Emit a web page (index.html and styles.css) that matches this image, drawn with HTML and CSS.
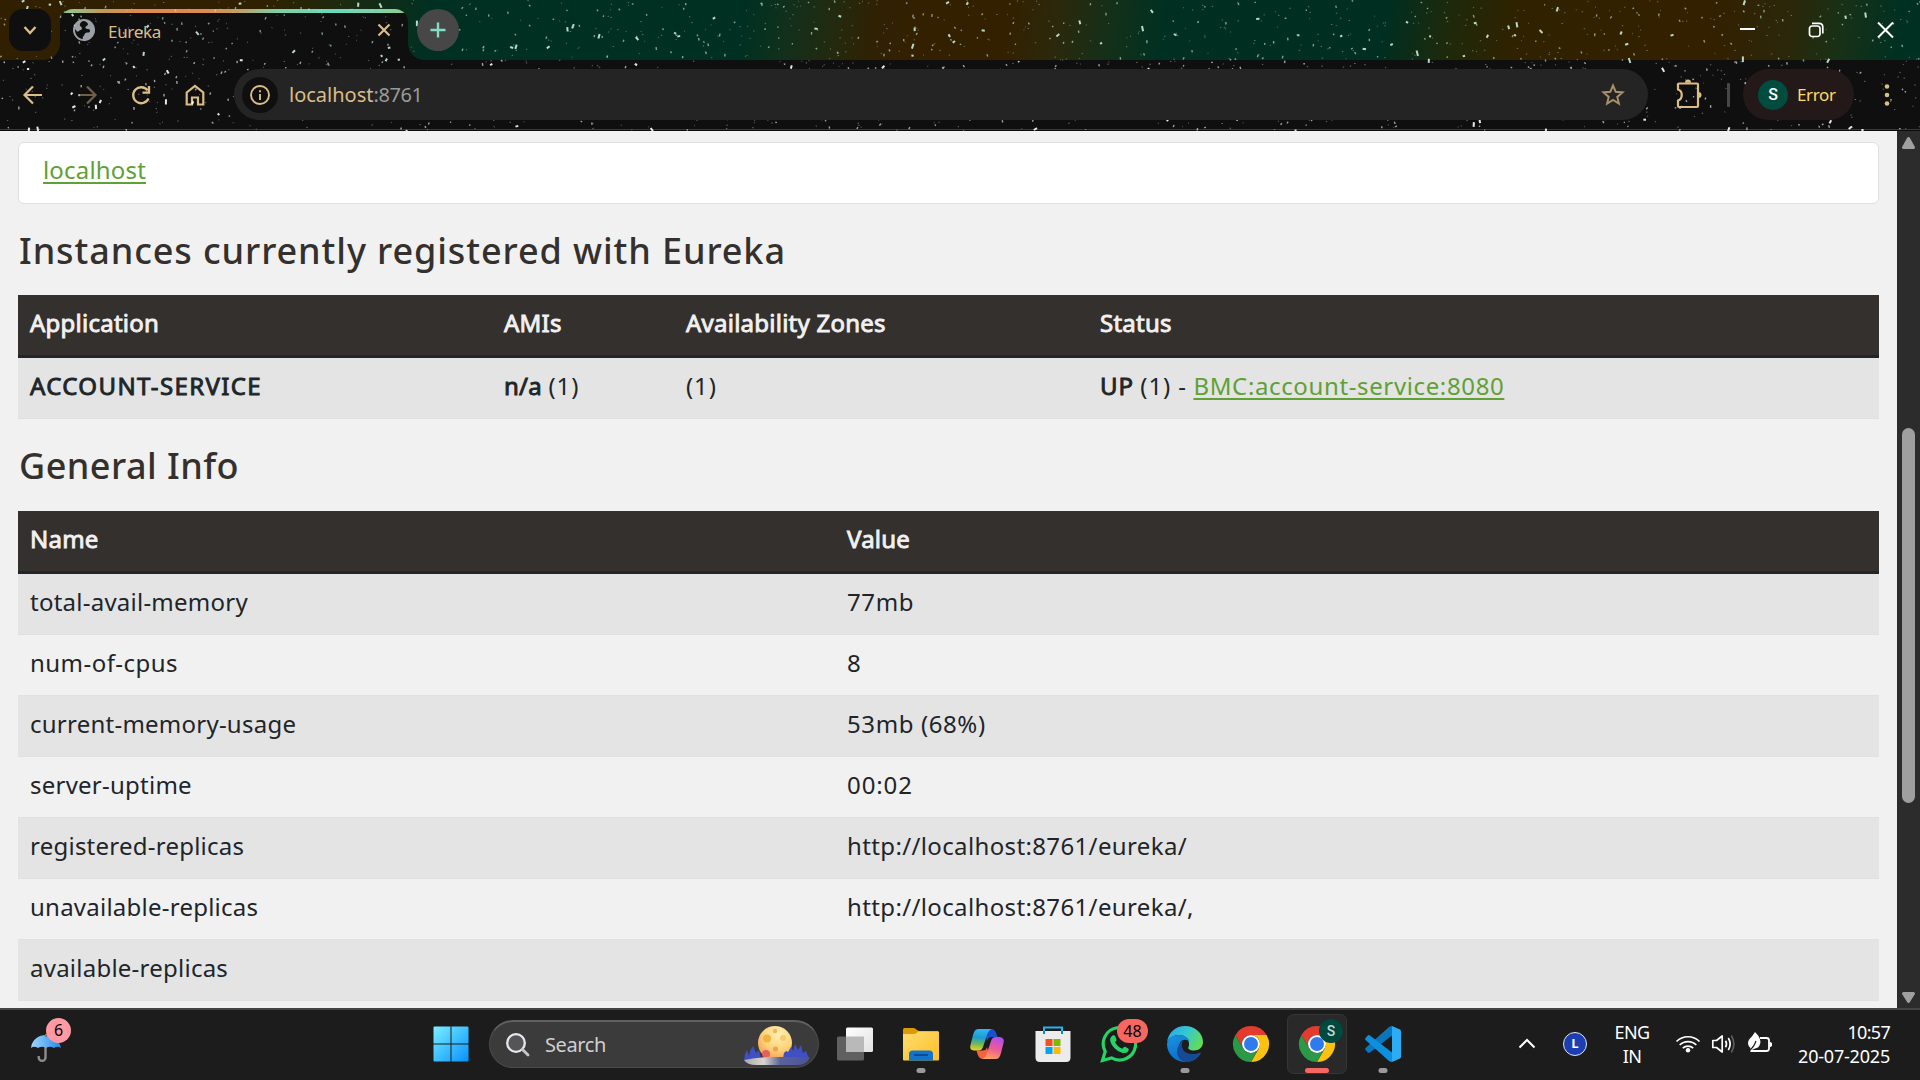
FILE: index.html
```html
<!DOCTYPE html>
<html lang="en">
<head>
<meta charset="utf-8">
<title>Eureka</title>
<link rel="stylesheet" href="styles.css">
</head>
<body>
<div class="screen">
  <header class="chrome">
    <svg class="stars" id="stars" width="1920" height="131" viewBox="0 0 1920 131"></svg>
    <div class="tabstrip">
      <button class="tab-search"><svg width="42" height="42" viewBox="-21 -21 42 42"><path d="M-5.500-3 0 3 5.500-3" fill="none" stroke="#dbbd87" stroke-width="2.400"/></svg></button>
      <div class="tab">
        <svg class="globe" width="24" height="24" viewBox="-12 -12 24 24"><circle r="11" fill="#9aa0a6"/><path d="M-1-9C-4-7.500-5-5-3.500-3.500-1.500-2.500-1.500-.5-3.500 0-5.500.5-5 2-7 1.500L-9-1C-9.500 4-6 8.500-1 9-2 7 0 6 .5 4.500 1 2.500 3 2.500 4.500 2.500 6 2.500 6.500 1 5.500-.5 4-1.500 2.500-.5 1.500-2 1-4 3.500-4 4-5.500 4-7 2-9-1-9Z" fill="#0f0f0f"/></svg>
        <span class="tab-title">Eureka</span>
        <svg class="tab-close" width="20" height="20" viewBox="-10 -10 20 20"><path d="M-5.500-5.500 5.500 5.500M5.500-5.500-5.500 5.500" stroke="#dbbd87" stroke-width="2.200"/></svg>
      </div>
      <button class="new-tab"><svg width="42" height="42" viewBox="-21 -21 42 42"><path d="M-7.500 0H7.500M0-7.500V7.500" stroke="#84dcc6" stroke-width="2.400"/></svg></button>
      <div class="window-controls">
        <svg width="69" height="60" viewBox="-34.500 -30 69 60"><path d="M-7.500-1H7.500" stroke="#fff" stroke-width="2"/></svg>
        <svg width="69" height="60" viewBox="-34.500 -30 69 60"><g fill="none" stroke="#fff" stroke-width="1.700"><rect x="-7" y="-4" width="10.500" height="10.500" rx="2.500"/><path d="M-4.500-6.600H2.500Q6.300-6.600 6.300-2.800V3.500"/></g></svg>
        <svg width="69" height="60" viewBox="-34.500 -30 69 60"><path d="M-7.500-7.500 7.500 7.500M7.500-7.500-7.500 7.500" stroke="#fff" stroke-width="2"/></svg>
      </div>
    </div>
    <div class="toolbar">
      <svg class="tool" width="54" height="54" viewBox="-27 -27 54 54"><path d="M9 0H-8M0-8.500-8.500 0 0 8.500" fill="none" stroke="#dbbd87" stroke-width="2.200"/></svg>
      <svg class="tool" width="54" height="54" viewBox="-27 -27 54 54"><path d="M-9 0H8M0-8.500 8.500 0 0 8.500" fill="none" stroke="#6f6049" stroke-width="2.200"/></svg>
      <svg class="tool" width="54" height="54" viewBox="-27 -27 54 54"><path d="M7.500 3.500A8 8 0 1 1 6.500-4.700M8-9V-2.300H1.500" fill="none" stroke="#dbbd87" stroke-width="2.300"/></svg>
      <svg class="tool" width="54" height="54" viewBox="-27 -27 54 54"><path d="M-8.300 9.500V-2.500L0-9 8.300-2.500V9.500H3V2.500H-3V9.500Z" fill="none" stroke="#dbbd87" stroke-width="2.200"/></svg>
      <div class="omnibox">
        <span class="site-info"><svg width="36" height="36" viewBox="-18 -18 36 36"><circle r="9" fill="none" stroke="#dbbd87" stroke-width="1.900"/><path d="M0-1V5M0-4.800V-2.800" stroke="#dbbd87" stroke-width="1.900"/></svg></span>
        <span class="url"><span class="host">localhost</span><span class="port">:8761</span></span>
        <svg class="star" width="28" height="28" viewBox="-14 -14 28 28"><path d="M0-9.500 2.700-3.200 9.500-2.600 4.300 1.900 5.900 8.600 0 5 -5.900 8.600-4.300 1.900-9.500-2.600-2.700-3.200Z" fill="none" stroke="#a89069" stroke-width="2"/></svg>
      </div>
      <svg class="ext" width="54" height="54" viewBox="-27 -27 54 54"><path d="M-9-11.500H9Q10-11.500 10-10.500V11Q10 12 9 12H-9Q-10 12-10 11V5.500C-5 4-5-4-10-5.500V-10.500Q-10-11.500-9-11.500Z" fill="none" stroke="#dbbd87" stroke-width="2.200"/><path d="M-3-12.300A3 3.200 0 0 1 3-12.300ZM10.500-3A3 3 0 0 1 10.500 3Z" fill="#dbbd87"/></svg>
      <span class="divider"></span>
      <div class="profile"><span class="avatar">S</span><span class="profile-label">Error</span></div>
      <svg class="menu" width="54" height="54" viewBox="-27 -27 54 54"><g fill="#dbbd87"><circle cy="-8.500" r="2.300"/><circle r="2.300"/><circle cy="8.500" r="2.300"/></g></svg>
    </div>
  </header>

  <div class="viewport">
    <main class="page">
      <div class="replica-card"><a class="link">localhost</a></div>
      <h1 class="heading">Instances currently registered with Eureka</h1>
      <table class="table instances">
        <thead><tr><th class="c-app">Application</th><th class="c-ami">AMIs</th><th class="c-zone">Availability Zones</th><th>Status</th></tr></thead>
        <tbody><tr><td><b class="service">ACCOUNT-SERVICE</b></td><td><b>n/a</b> <span class="tally">(1)</span></td><td><span class="tally">(1)</span></td><td><b class="tally">UP</b> <span class="tally">(1) -</span> <a class="link instance">BMC:account-service:8080</a></td></tr></tbody>
      </table>
      <h1 class="heading second">General Info</h1>
      <table class="table info">
        <thead><tr><th class="c-name">Name</th><th>Value</th></tr></thead>
        <tbody>
          <tr><td>total-avail-memory</td><td class="amount">77mb</td></tr>
          <tr><td class="cpus">num-of-cpus</td><td>8</td></tr>
          <tr><td>current-memory-usage</td><td class="amount">53mb (68%)</td></tr>
          <tr><td>server-uptime</td><td class="tally">00:02</td></tr>
          <tr><td>registered-replicas</td><td class="address">http://localhost:8761/eureka/</td></tr>
          <tr><td>unavailable-replicas</td><td class="address">http://localhost:8761/eureka/,</td></tr>
          <tr><td>available-replicas</td><td></td></tr>
        </tbody>
      </table>
    </main>
    <div class="scrollbar">
      <svg width="23" height="23" viewBox="0 0 23 23"><path d="M11.500 7.500 16.500 16.500H6.500Z" fill="#a0a0a0" stroke="#a0a0a0" stroke-width="3" stroke-linejoin="round"/></svg>
      <span class="thumb"></span>
      <svg width="23" height="23" viewBox="0 0 23 23"><path d="M11.500 16.500 16.500 8.500H6.500Z" fill="#a0a0a0" stroke="#a0a0a0" stroke-width="3" stroke-linejoin="round"/></svg>
    </div>
  </div>

  <footer class="taskbar">
    <div class="weather">
      <svg width="36" height="30" viewBox="0 0 36 30"><defs><linearGradient id="umb"><stop offset="0" stop-color="#9fd4fb"/><stop offset=".5" stop-color="#62b2f4"/><stop offset="1" stop-color="#1f8bea"/></linearGradient></defs><path d="M15.500 12V23.500a3.400 3.400 0 0 1-6.800 0V22" fill="none" stroke="#8d8d8d" stroke-width="2.400"/><path d="M1 14C2 5 9 1 16 1S29 5 31 14Q27 11.500 24 14 20 11.500 16 14 12 11.500 8 14 4 11.500 1 14Z" fill="url(#umb)"/><path d="M16 0V3" stroke="#777" stroke-width="2"/></svg>
      <span class="weather-badge">6</span>
    </div>
    <div class="apps">
      <svg class="slot" width="66" height="70" viewBox="-33 -34 66 70"><defs><linearGradient id="win" x1="0" y1="0" x2="1" y2="1" gradientUnits="objectBoundingBox"><stop offset="0" stop-color="#7cf0ff"/><stop offset=".5" stop-color="#3fc0ff"/><stop offset="1" stop-color="#0a90fb"/></linearGradient></defs><path d="M-17.500-16.500q0-1 1-1H-.5V-.5H-17.500ZM.5-17.500H16.500q1 0 1 1V-.5H.5ZM-17.500.5H-.5V17.500H-16.500q-1 0-1-1ZM.5.500H17.500V16.500q0 1-1 1H.5Z" fill="url(#win)"/></svg>
      <div class="search">
        <svg class="lens" width="28" height="28" viewBox="0 0 28 28"><circle cx="12" cy="12" r="8.800" fill="#555" stroke="#e8e8ee" stroke-width="2.300"/><path d="M18.500 18.500 24 24" stroke="#c8c8cc" stroke-width="2.800" stroke-linecap="round"/></svg>
        <span class="search-text">Search</span>
        <svg class="moon" width="68" height="44" viewBox="744 1022 68 44"><defs><radialGradient id="mn" cx=".6" cy=".25" r=".8"><stop offset="0" stop-color="#fff0b0"/><stop offset=".55" stop-color="#fcd47c"/><stop offset="1" stop-color="#f49a4c"/></radialGradient><linearGradient id="gr"><stop offset="0" stop-color="#aaa9a8"/><stop offset=".3" stop-color="#d8d5cc"/><stop offset=".55" stop-color="#5a6398"/><stop offset="1" stop-color="#4852a0"/></linearGradient></defs><circle cx="776" cy="1042" r="17" fill="url(#mn)"/><circle cx="768" cy="1037.500" r="4" fill="#f0b440"/><circle cx="784" cy="1037" r="3" fill="#f3cb72"/><circle cx="776" cy="1030" r="2.200" fill="#f2b35e"/><circle cx="776.500" cy="1048" r="2.600" fill="#f5a050"/><circle cx="767" cy="1053" r="4" fill="#e4605c"/><path d="M745 1060 746 1053 748 1049 750 1055 751 1050 754 1045 757 1052 760 1049 762 1058ZM784 1057 785 1052 787 1050 789 1051 792 1046 794 1050 796 1043 799 1049 802 1044 804 1052 807 1050 810 1058Z" fill="#3f4fc4"/><path d="M745 1059Q760 1056 772 1056H811Q808 1064 799 1064H757Q748 1064 745 1059Z" fill="url(#gr)"/></svg>
      </div>
      <svg class="slot first" width="66" height="70" viewBox="-33 -34 66 70"><defs><linearGradient id="tv" x1="0" y1="0" x2="1" y2="1"><stop offset="0" stop-color="#fff"/><stop offset="1" stop-color="#e2e2e2"/></linearGradient></defs><rect x="-18" y="-7.500" width="27" height="24" rx="1.500" fill="#606060"/><rect x="-9" y="-16.500" width="27" height="24.500" rx="1.500" fill="url(#tv)"/><path d="M-9-7.500H9V8H-7.500Q-9 8-9 6.500Z" fill="#b9b9b9"/></svg>
      <svg class="slot" width="66" height="70" viewBox="-33 -34 66 70"><defs><linearGradient id="fd" x1="0" y1="0" x2="1" y2="1"><stop offset="0" stop-color="#ffdc70"/><stop offset="1" stop-color="#fcc026"/></linearGradient></defs><path d="M-18-14.500Q-18-16-16.500-16H-7.500Q-6-16-4-14L-2-13H16.500Q18-13 18-11.500V0H-18Z" fill="#dc9a06"/><path d="M-18-10H-7Q-5-10-3-12.500H17Q18-12.500 18-11V15.500Q18 16.500 17 16.500H-17Q-18 16.500-18 15.500Z" fill="url(#fd)"/><path d="M-12 16.500V10Q-12 6.500-8.500 6.500H8.500Q12 6.500 12 10V16.500Z" fill="#1173cc"/><path d="M-7 11H7" stroke="#0a4b93" stroke-width="2"/><rect x="-4.500" y="24" width="9" height="5" rx="2.500" fill="#9a9a9a"/></svg>
      <svg class="slot" width="66" height="70" viewBox="-33 -34 66 70"><defs><linearGradient id="cp1" x1=".4" y1="0" x2=".3" y2="1"><stop offset="0" stop-color="#2cb9f2"/><stop offset=".4" stop-color="#1f9ad0"/><stop offset=".7" stop-color="#6dbb55"/><stop offset="1" stop-color="#f5cf20"/></linearGradient><linearGradient id="cp2" x1=".6" y1="0" x2=".3" y2="1"><stop offset="0" stop-color="#b050e8"/><stop offset=".5" stop-color="#ee5a96"/><stop offset="1" stop-color="#ffa35c"/></linearGradient></defs><path d="M-3-15H4Q8-15 9.500-10L10.500-7H5Q1-7 0-3Z" fill="#1b4fd0"/><path d="M3 15H-4Q-8 15-9.500 10L-10.500 6.500H-5Q-1 7 0 3Z" fill="#f4633c"/><path d="M-9-15H5Q1.500-14 0-9L-4 3Q-5 6.500-9 6.500H-13Q-18 6-16.500 1L-14-9Q-12.500-15-9-15Z" fill="url(#cp1)"/><path d="M9 15H-5Q-1.500 14 0 9L4-3Q5-7 9-7H13Q18-6 16.500-1L14 9Q12.500 15 9 15Z" fill="url(#cp2)"/></svg>
      <svg class="slot" width="66" height="70" viewBox="-33 -34 66 70"><path d="M-9-9V-16.500H9V-9" fill="none" stroke="#28b2ee" stroke-width="2"/><path d="M-17.500-13H17.500V13.500Q17.500 18 13 18H-13Q-17.500 18-17.500 13.500Z" fill="#ececec"/><path d="M-9-13V-10M9-13V-10" stroke="#0f86cf" stroke-width="2"/><path d="M-7.500-5H-.5V2H-7.500Z" fill="#f25022"/><path d="M.5-5H7.500V2H.5Z" fill="#7fba00"/><path d="M-7.500 3H-.5V10H-7.500Z" fill="#00a4ef"/><path d="M.5 3H7.500V10H.5Z" fill="#ffb900"/></svg>
      <div class="slot-box"><svg class="slot" width="66" height="70" viewBox="-33 -34 66 70"><path d="M-16.500 16.500-13.800 7.500A16.200 16.200 0 1 1-7.500 13.900Z" fill="none" stroke="#25d366" stroke-width="3.200"/><path d="M-6.500-8.500Q-4.500-9.500-3.800-7.800L-2.500-4.600Q-2.200-3.600-4-1.800-1.500 3 3.500 4.800 5 2.500 6 2.800L9.300 4.400Q10.500 5.200 9 7.500 6.500 10 2.500 8.500-6 5.500-8.700-2.500-9.500-6.500-6.500-8.500Z" fill="#25d366"/></svg><span class="count">48</span></div>
      <svg class="slot" width="66" height="70" viewBox="-33 -34 66 70"><defs><linearGradient id="ed1" x1="0" y1=".2" x2="1" y2=".6"><stop offset="0" stop-color="#28a8e8"/><stop offset=".5" stop-color="#35c8d0"/><stop offset="1" stop-color="#64dd52"/></linearGradient><linearGradient id="ed2" x1="0" y1="0" x2=".6" y2="1"><stop offset="0" stop-color="#1a94e0"/><stop offset="1" stop-color="#0a68c8"/></linearGradient></defs><path d="M-18-1C-17-12-9-18 0-18 10-18 18-11 18-2 18 3 14 6.500 9 6.500 5 6.500 2.500 5 3.500 3 6-2 1-10-7-9-13-8.500-17-5-18-1Z" fill="url(#ed1)"/><path d="M-18 0C-17-6-12-9-6-9 0-9 4-6 4.500-2 2-5-3-5-5-1-8 5-3 12 4 12 9 12 12 10 16 8.500 13 15 7 18 0 18-10 18-18 10-18 0Z" fill="url(#ed2)"/><path d="M-1-3.500C-5 0-3 7 2 9 7 11 11 10 15.500 8.500 13 14 7 18 1 18-7 17-10 8-6.500 2-5-1-3-3-1-3.500Z" fill="#164a94"/><rect x="-4.500" y="24" width="9" height="5" rx="2.500" fill="#9a9a9a"/></svg>
      <svg class="slot" width="66" height="70" viewBox="-33 -34 66 70"><g id="chr"><path d="M-15.600-9A18 18 0 0 1 15.600-9H0A9 9 0 0 0-7.800 4.500Z" fill="#e33b2e"/><path d="M15.600-9A18 18 0 0 1 0 18L7.800 4.500A9 9 0 0 0 0-9Z" fill="#fdc20f"/><path d="M0 18A18 18 0 0 1-15.600-9L-7.800 4.500A9 9 0 0 0 7.800 4.500Z" fill="#2a9a46"/><circle r="9" fill="#fff"/><circle r="7" fill="#2f7bee"/></g></svg>
      <div class="slot-box active"><svg class="slot" width="66" height="70" viewBox="-33 -34 66 70"><rect x="-29.500" y="-29.500" width="59" height="59" rx="6" fill="#292929" stroke="#363636"/><use href="#chr"/><circle cx="14" cy="-13" r="12" fill="#00493e"/><rect x="-12" y="24" width="24" height="5" rx="2.500" fill="#f66762"/></svg><span class="mini">S</span></div>
      <svg class="slot" width="66" height="70" viewBox="-33 -34 66 70"><path d="M9-18V-8.500L-13 8.500Q-14.500 9.500-15.500 8.200L-17.500 6Q-18.500 5-17.500 4L6-17Q7.500-18 9-18Z" fill="#0a76bd"/><path d="M9 18V8.500L-13-8.500Q-14.500-9.500-15.500-8.200L-17.500-6Q-18.500-5-17.500-4L6 17Q7.500 18 9 18Z" fill="#0d8fdd"/><path d="M9-18 17-14.500Q18-14 18-12.500V12.500Q18 14 17 14.500L9 18Z" fill="#2bacf4"/><rect x="-4.500" y="24" width="9" height="5" rx="2.500" fill="#9a9a9a"/></svg>
    </div>
    <div class="tray">
      <svg class="tray-up" width="24" height="24" viewBox="-12 -12 24 24"><path d="M-7.500 3.500 0-4 7.500 3.500" fill="none" stroke="#fff" stroke-width="2"/></svg>
      <span class="tray-l">L</span>
      <span class="lang"><span>ENG</span><span>IN</span></span>
      <svg class="wifi" width="26" height="24" viewBox="-13 -12 26 24"><g fill="none" stroke="#fff" stroke-width="1.700"><path d="M-11.500-2.500A16.300 16.300 0 0 1 11.500-2.500M-8.300 1A11.800 11.800 0 0 1 8.300 1M-5.200 4.200A7.500 7.500 0 0 1 5.200 4.200"/></g><circle cy="6.200" r="2.200" fill="#fff"/></svg>
      <svg class="vol" width="26" height="24" viewBox="-13 -12 26 24"><g fill="none" stroke="#fff" stroke-width="1.700" stroke-linejoin="round"><path d="M-11.200-3.500H-7.500L-1.800-8V8L-7.500 3.500H-11.200ZM1.500-3.200Q3.500 0 1.500 3.200M4.300-6Q8 0 4.300 6"/><path d="M7.300-8.500Q12.500 0 7.300 8.500" stroke="#5c5c5c"/></g></svg>
      <svg class="bat" width="26" height="24" viewBox="-13 -12 26 24"><path d="M0-6H6.500Q9-6 9-3.500V4.500Q9 7 6.500 7H-9.500" fill="none" stroke="#fff" stroke-width="1.800"/><path d="M9.500-2.500 12-1V2L9.500 3.500Z" fill="#fff"/><path d="M-5-12Q2-5 0 0-1 4-5 4.500L-10 7-9.500 4Q-14 0-10.500-5-8-7-5-12Z" fill="#fff"/><path d="M-11 7Q-6 3-4-3" fill="none" stroke="#1c1c1c" stroke-width="1.200"/></svg>
      <span class="clock"><span class="time">10:57</span><span class="date">20-07-2025</span></span>
    </div>
  </footer>
</div>
<script src="script.js"></script>
</body>
</html>
```
FILE: styles.css
```css
* { box-sizing: border-box; }

body {
  margin: 0;
  overflow: hidden;
  font-family: "Noto Sans", "Open Sans", sans-serif;
}

button { border: 0; padding: 0; }
svg { display: block; flex: none; }

.screen {
  width: 1920px;
  height: 1080px;
  display: flex;
  flex-direction: column;
}

/* Browser frame */
.chrome {
  position: relative;
  height: 131px;
  background: #0f0f0f;
  border-bottom: 1px solid #0c0b0b;
}
.stars { position: absolute; left: 0; top: 0; z-index: 1; }

.tabstrip {
  height: 60px;
  display: flex;
  align-items: center;
  padding-left: 9px;
  background: linear-gradient(97deg, #301f00 0, #301f00 260px, #20290d 330px, #003022 430px, #003022 740px, #10301d 780px, #24290d 835px, #302104 870px, #332000 920px, #332000 1000px, #2c280b 1050px, #12301a 1110px, #003022 1160px, #002e20 1380px, #1e290b 1440px, #302200 1510px, #332000 1700px, #2b270a 1780px, #183116 1830px, #003022 1890px);
}
.tab-search { width: 42px; height: 42px; border-radius: 14px; background: #0f0f0f; z-index: 2; }
.tab {
  position: relative;
  width: 348px;
  height: 51px;
  margin: 9px 0 0 9px;
  padding: 0 14px 9px 12px;
  display: flex;
  align-items: center;
  border-radius: 13px 13px 0 0;
  background: linear-gradient(90deg, #87cf9c 0, #c09a5e 12%, #e08a52 22%, #e08a52 40%, #c99a60 50%, #7ccfa8 62%, #6bd8bd 80%, #7fd3a8 92%, #92c98d 100%) 0 0 / 100% 4px no-repeat, #0f0f0f;
}
.tab::before, .tab::after {
  content: "";
  position: absolute;
  bottom: 0;
  width: 16px;
  height: 16px;
}
.tab::before { left: -16px; background: radial-gradient(circle at 0 0, transparent 15.5px, #0f0f0f 16px); }
.tab::after { right: -16px; background: radial-gradient(circle at 100% 0, transparent 15.5px, #0f0f0f 16px); }
.tab-title { margin-left: 12px; flex: 1; font-size: 17px; letter-spacing: -0.310px; color: #dbbd87; line-height: 24px; padding-top: 3px; }
.new-tab { width: 42px; height: 42px; margin-left: 9px; border-radius: 50%; background: #474747; z-index: 2; }
.window-controls { display: flex; margin-left: auto; z-index: 2; }

.toolbar {
  height: 70px;
  display: flex;
  align-items: center;
  padding-left: 6px;
  border-bottom: 1px solid #3b392f;
}
.omnibox {
  width: 1414px;
  height: 51px;
  margin-left: 12px;
  padding: 0 21px 0 8px;
  display: flex;
  align-items: center;
  border-radius: 26px;
  background: #242424;
  z-index: 2;
}
.site-info { border-radius: 50%; background: #0f0f0f; }
.url { margin-left: 11px; flex: 1; font-size: 20px; line-height: 28px; color: #9a9a9a; }
.host { color: #dbbd87; }
.port { letter-spacing: -0.400px; }
.ext { margin-left: 13px; z-index: 2; }
.divider { width: 3px; height: 24px; margin: 0 13px 0 12px; background: #474747; border-radius: 1px; }
.profile {
  width: 111px;
  height: 51px;
  padding-left: 15px;
  display: flex;
  align-items: center;
  border-radius: 26px;
  background: #231918;
  z-index: 2;
}
.avatar {
  width: 30px;
  height: 30px;
  border-radius: 50%;
  background: #004d40;
  color: #fff;
  font: 500 16px/30px Roboto, sans-serif;
  text-align: center;
}
.profile-label { margin-left: 9px; font-size: 17px; letter-spacing: -0.350px; color: #ffdb66; }
.menu { margin-left: 6px; }

/* Page */
.viewport { height: 877px; display: flex; background: #f1f1f1; }
.page { flex: 1; padding: 11px 18px 0; overflow: hidden; color: #212529; }
.replica-card {
  height: 62px;
  padding: 9px 24px;
  border: 1px solid #dfdfdf;
  border-radius: 6px;
  background: #fff;
  font-size: 24px;
  line-height: 36px;
  letter-spacing: 0.180px;
}
.link { color: #5fa134; text-decoration: underline; text-decoration-thickness: 2px; text-underline-offset: 3px; }
.heading {
  height: 43px;
  margin: 24px 0;
  padding: 1px 0 0 1px;
  font-size: 36px;
  line-height: 43px;
  font-weight: 500;
  letter-spacing: 0.900px;
  color: #34302d;
  white-space: nowrap;
}
.heading.second { margin: 25px 0 24px; padding-top: 0; letter-spacing: 0.460px; }
.table {
  width: 1861px;
  table-layout: fixed;
  border-collapse: separate;
  border-spacing: 0;
  font-size: 24px;
  line-height: 36px;
  letter-spacing: 0.240px;
}
.table th, .table td { padding: 10px 12px 14px; text-align: left; white-space: nowrap; font-weight: 400; }
.table td { border-bottom: 1px solid #dee0e4; height: 61px; }
.table th { height: 63px; background: #34302d; color: #f1f1f1; border-bottom: 3px solid #212529; -webkit-text-stroke: 0.900px #f1f1f1; }
.table b { font-weight: 400; -webkit-text-stroke: 0.900px #212529; }
.table tbody tr:nth-child(odd) { background: #e4e4e4; }
.c-app { width: 474px; }
.c-ami { width: 182px; }
.c-zone { width: 414px; }
.c-name { width: 817px; }
.table .service { letter-spacing: 1.380px; }
.table .tally { letter-spacing: 0.900px; }
.table .instance { letter-spacing: 0.630px; }
.table .amount { letter-spacing: 0.600px; }
.table .cpus { letter-spacing: 0.460px; }
.table .address { letter-spacing: 0.365px; }

.scrollbar {
  width: 23px;
  display: flex;
  flex-direction: column;
  align-items: center;
  justify-content: space-between;
  background: #2c2c2c;
}
.thumb { width: 13px; height: 375px; margin-top: 92px; border-radius: 7px; background: #9f9f9f; }

/* Taskbar */
.taskbar {
  height: 72px;
  display: flex;
  border-top: 2px solid #444;
  background: #1c1c1c;
  color: #fff;
}
.weather { position: relative; width: 418px; padding: 24px 0 0 30px; }
.weather-badge {
  position: absolute;
  left: 46px;
  top: 8px;
  width: 25px;
  height: 25px;
  border-radius: 50%;
  background: #ff99a4;
  color: #000;
  font-size: 16px;
  line-height: 24px;
  text-align: center;
}
.apps { display: flex; width: 1000px; }
.search {
  width: 330px;
  height: 48px;
  margin: 10px 3px 0 5px;
  padding: 0 7px 0 14px;
  display: flex;
  align-items: center;
  border: 1px solid #4b4b4b;
  border-top: 2px solid #606060;
  border-radius: 24px;
  background: #3b3b3b;
}
.search-text { flex: 1; margin-left: 13px; font-size: 20px; letter-spacing: -0.390px; color: #d0d0d0; }
.slot-box { position: relative; }
.count {
  position: absolute;
  left: 31px;
  top: 9px;
  width: 31px;
  height: 24px;
  border-radius: 12px;
  background: #f66762;
  color: #000;
  font-size: 16px;
  line-height: 24px;
  text-align: center;
}
.mini {
  position: absolute;
  left: 35px;
  top: 9px;
  width: 24px;
  font: 500 14px/24px Roboto, sans-serif;
  text-align: center;
  color: #c8d8d4;
}
.tray { flex: 1; display: flex; align-items: center; height: 68px; padding-left: 97px; font-size: 18px; line-height: 24px; }
.tray-l {
  width: 24px;
  height: 24px;
  margin-left: 24px;
  border: 1.500px solid #e4e4ea;
  border-radius: 50%;
  background: #1d3eb2;
  font: 700 13px/21px "Open Sans", sans-serif;
  text-align: center;
}
.lang { width: 40px; margin-left: 25px; display: flex; flex-direction: column; align-items: center; letter-spacing: -0.600px; }
.wifi { margin-left: 23px; }
.vol { margin-left: 10px; }
.bat { margin-left: 10px; }
.clock { margin: 0 30px 0 auto; display: flex; flex-direction: column; align-items: flex-end; }
.time { letter-spacing: -0.700px; }
.date { letter-spacing: -0.200px; }
```
FILE: script.js
```js
// Scatter small specks across the browser frame with a fixed seed.
(function () {
  var seed = 20250720;
  function rnd() {
    seed = (seed * 1664525 + 1013904223) % 4294967296;
    return seed / 4294967296;
  }
  var out = "";
  for (var i = 0; i < 1700; i++) {
    var x = rnd() * 1920, y = rnd() * 130, big = rnd();
    var len = big > 0.9 ? 3 + rnd() * 3 : big > 0.6 ? 2 + rnd() : 1;
    var a = rnd() * Math.PI;
    var o = big > 0.9 ? 0.9 : big > 0.6 ? 0.6 : 0.4;
    var tint = y > 60 ? "#fff" : "#c8eedd";
    out += '<path d="M' + x.toFixed(1) + " " + y.toFixed(1) + "l" +
      (Math.cos(a) * len * 0.6).toFixed(1) + " " + (Math.sin(a) * len).toFixed(1) +
      '" stroke="' + tint + '" stroke-width="' + (big > 0.9 ? 2 : 1.4) + '" opacity="' + o + '"/>';
  }
  document.getElementById("stars").innerHTML = out;
})();
```
